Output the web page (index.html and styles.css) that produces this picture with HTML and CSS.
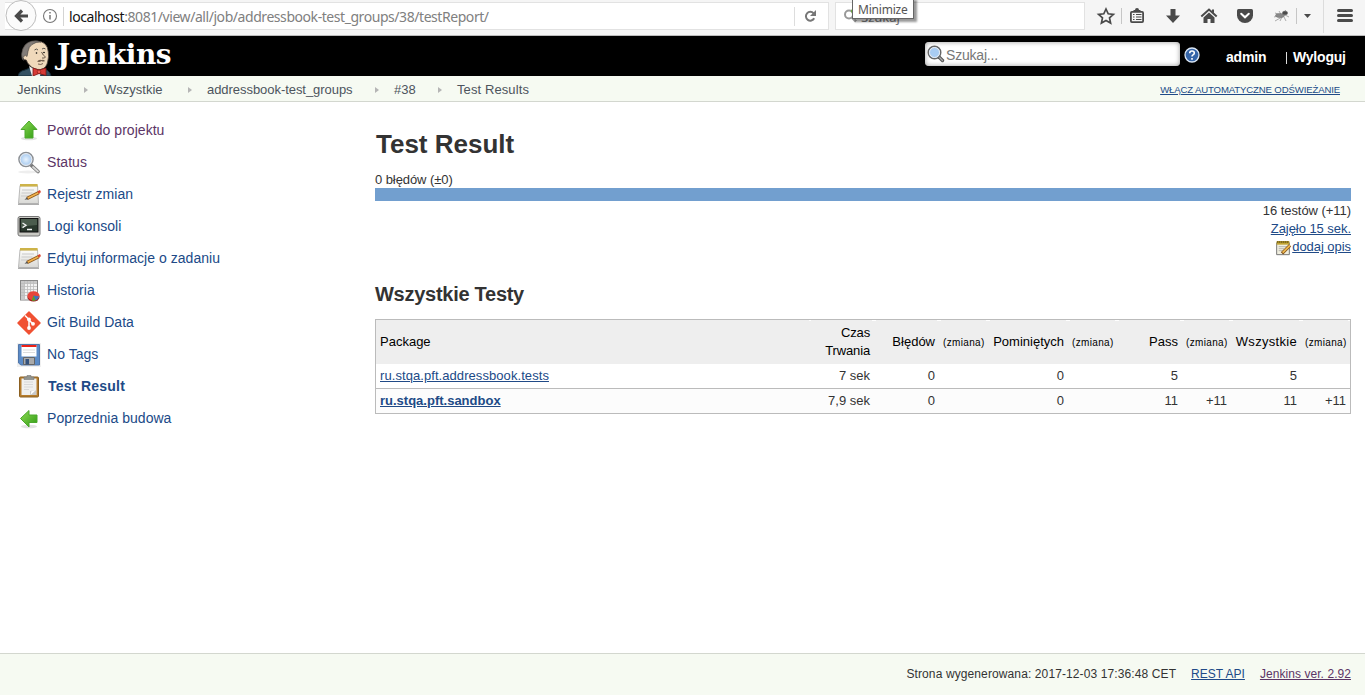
FILE: index.html
```html
<!DOCTYPE html>
<html lang="pl">
<head>
<meta charset="utf-8">
<title>Test Results [Jenkins]</title>
<link rel="stylesheet" href="styles.css">
</head>
<body>
<svg class="defs" width="0" height="0" aria-hidden="true">
  <defs>
    <linearGradient id="green" x1="0" y1="0" x2="1" y2="1"><stop offset="0" stop-color="#8fdc55"/><stop offset="1" stop-color="#2f9a13"/></linearGradient>
    <linearGradient id="paper" x1="0" y1="0" x2="0" y2="1"><stop offset="0" stop-color="#fdfdfb"/><stop offset="1" stop-color="#d9d9d6"/></linearGradient>
    <radialGradient id="glass"><stop offset="0" stop-color="#e8f3fd"/><stop offset="1" stop-color="#9cc3ee"/></radialGradient>
    <symbol id="lens" viewBox="0 0 24 24">
      <ellipse cx="11" cy="21" rx="10" ry="1.500" fill="#eee"/>
      <path d="M14.500 14.500l6.500 6" stroke="#777" stroke-width="3.600" stroke-linecap="round"/>
      <path d="M16 16l5 4.500" stroke="#d8d8d8" stroke-width="1.800" stroke-linecap="round"/>
      <circle cx="9" cy="8.500" r="7" fill="url(#glass)" stroke="#8b8f94" stroke-width="1.600"/>
      <circle cx="9" cy="8.500" r="5.900" fill="none" stroke="#f0f0f0" stroke-width="1"/>
    </symbol>
    <symbol id="lens-small" viewBox="0 0 18 18">
      <path d="M12 12l3.500 3.500" stroke="#555" stroke-width="3.400" stroke-linecap="round"/>
      <path d="M12.500 12.500l3 3" stroke="#aaa" stroke-width="1.200" stroke-linecap="round"/>
      <circle cx="7.500" cy="7.500" r="6.300" fill="url(#glass)" stroke="#666" stroke-width="1.400"/>
      <circle cx="7.500" cy="7.500" r="5" fill="#a8ccf3" stroke="#eee" stroke-width="1"/>
    </symbol>
    <symbol id="notepad" viewBox="0 0 24 24">
      <path d="M3 2.500h17.500l1 18H1.500z" fill="url(#paper)" stroke="#aaa" stroke-width=".8"/>
      <path d="M1 21.300h21" stroke="#999" stroke-width="1"/>
      <path d="M3 1h17.500v2.500H3z" fill="#b99a2b"/>
      <path d="M3.500 2h17" stroke="#eedc7d" stroke-width="1.500" stroke-dasharray="1 1"/>
      <path d="M5 7h12M4.500 10h11M4 13h8" stroke="#c9c9c9"/>
      <path d="M10 15.500l12-6" stroke="#8d5717" stroke-width="3.200"/>
      <path d="M10.500 15.200l11-5.400" stroke="#f0b14e" stroke-width="1.800"/>
      <path d="M20.600 8.300l2.400-1.200 1 2.200-2.500 1.300z" fill="#d9452e"/>
      <path d="M7.500 16.700l2.500-2.400 1.200 2z" fill="#555"/>
    </symbol>
  </defs>
</svg>

<div class="browser">
  <div class="url">
    <svg class="url-icons" width="60" height="32" viewBox="0 0 60 32">
      <circle cx="16" cy="15.500" r="15" fill="#fbfbfb" stroke="#bcbcbc"/>
      <path d="M23 16H11.500M17 10.500L11.500 16l5.500 5.500" fill="none" stroke="#4a4a4a" stroke-width="3.200"/>
      <circle cx="45" cy="16" r="6.500" fill="none" stroke="#777" stroke-width="1.100"/>
      <path d="M45 15v4.500M45 12v1.600" stroke="#777" stroke-width="1.500"/>
      <path d="M58.500 7v19" stroke="#d4d4d4"/>
    </svg>
    <span class="address"><b>localhost</b>:8081/view/all/job/addressbook-test_groups/38/testReport/</span>
    <svg class="reload" width="34" height="26" viewBox="0 0 34 26">
      <path d="M.5 4v19" stroke="#ddd"/>
      <path d="M19.600 10.300a4.400 4.400 0 1 0 .6 5" fill="none" stroke="#777" stroke-width="2"/>
      <path d="M22 7v6h-6z" fill="#777"/>
    </svg>
  </div>
  <div class="web-search">
    <svg width="18" height="20" viewBox="0 0 18 20"><circle cx="7" cy="8.500" r="4" fill="none" stroke="#999" stroke-width="2"/><path d="M10 11.500l4 4" stroke="#999" stroke-width="2.500"/><circle cx="11" cy="5" r="2" fill="#62ad32"/></svg>
    <span>Szukaj</span>
    <div class="tooltip">Minimize</div>
  </div>
  <svg class="tools" width="280" height="35" viewBox="1085 0 280 35">
    <path d="M1106 9l2.200 4.800 5.200.6-3.900 3.500 1.100 5.200-4.600-2.600-4.600 2.600 1.100-5.200-3.900-3.500 5.200-.6z" fill="none" stroke="#4a4a4a" stroke-width="1.700"/>
    <path d="M1121.500 8v16M1296.500 8v16" stroke="#c6c6c6"/>
    <rect x="1130.900" y="11.900" width="12.200" height="10.200" rx="1" fill="none" stroke="#4a4a4a" stroke-width="1.800"/>
    <path d="M1133.500 12V9.900h1.500a2 2 0 0 1 4 0h1.500V12z" fill="#4a4a4a"/>
    <path d="M1133 14.500h1.500M1136 14.500h5.500M1133 17h1.500M1136 17h5.500M1133 19.500h1.500M1136 19.500h5.500" stroke="#4a4a4a" stroke-width="1.200"/>
    <path d="M1170.500 9h5v6.500h4.500l-7 7.500-7-7.500h4.500z" fill="#4a4a4a"/>
    <path d="M1201.300 16.500l7.700-6.900 7.700 6.900" fill="none" stroke="#4a4a4a" stroke-width="2"/>
    <path d="M1203.500 17.500l5.500-5 5.500 5v5.500h-4v-4h-3v4h-4zM1212 9.500h2v4l-2-1.700z" fill="#4a4a4a"/>
    <path d="M1238.500 9h13q1.500 0 1.500 1.500v5a8 7.500 0 0 1-16 0v-5q0-1.500 1.500-1.500z" fill="#4a4a4a"/>
    <path d="M1241.200 13.700l3.800 3.600 3.800-3.600" fill="none" stroke="#fff" stroke-width="2" stroke-linecap="round"/>
    <g stroke="#777" stroke-width=".6" fill="#888">
      <path d="M1275 13l6 2M1274 17l8-2M1275 21l7-4M1280 21l2-4M1282 14l4-4M1284 17l2 4M1285 15l4 2M1279 11l3 5"/>
      <ellipse cx="1280" cy="15.500" rx="4.500" ry="2"/><ellipse cx="1285" cy="13" rx="2.700" ry="1.900" fill="#4a4a4a"/>
    </g>
    <path d="M1304 14h7l-3.500 4z" fill="#4a4a4a"/>
    <path d="M1323.500 0v33" stroke="#dcdcdc"/>
    <path d="M1338.500 10.500h13M1338.500 15.500h13M1338.500 20.500h13" stroke="#4a4a4a" stroke-width="3" stroke-linecap="round"/>
  </svg>
</div>

<header class="header">
  <svg class="butler" width="34" height="36" viewBox="0 0 34 36">
    <path d="M0 36q1-5 7-6l5-2h11l6 2q3 2 4 6z" fill="#335061" stroke="#162c38"/>
    <path d="M11 26l7 4 6-3-2 9h-8z" fill="#eee"/>
    <path d="M4 15Q4 1.500 18 1q11.500 0 12.300 11 .7 5-.5 9-1 7-7 8.500-7 .5-11.500-4.500-2-2-3-5Q4 20 4 15z" fill="#f0d9bb" stroke="#4a403a" stroke-width=".8"/>
    <path d="M3.500 14Q5 3 14 1q6-.8 9 1-5-.5-9 2.500-3.500 2.500-4 7l-1 5q-1.500-2-3-.5-1.500 1-.5 4.500-2-1-2-6.500z" fill="#827c78" stroke="#3b3735" stroke-width=".6"/>
    <path d="M16.500 10q2-2 3.500 0M24 9q2-1.500 3.500 0" fill="none" stroke="#333" stroke-width=".8"/>
    <circle cx="18.500" cy="13" r=".8"/><circle cx="26" cy="12.500" r=".8"/>
    <path d="M23.500 12q1.500 3.500 4 5-1 1.500-3.500 1" fill="none" stroke="#4a3a30" stroke-width=".8"/>
    <path d="M19 21.500q2-2.500 4.500-1.500 2-1 3.500 1-2 1-3.500 0-2 1.500-4.500.5z" fill="#75604e"/>
    <path d="M20 24q3 1.200 5-.5" fill="none" stroke="#5a463a" stroke-width=".8"/>
    <path d="M15 28l6 2 7-2v7.500l-7-2-6 2.500z" fill="#d63a36" stroke="#7c1411" stroke-width=".8"/>
    <circle cx="21" cy="31.800" r="1.800" fill="#ef5a50" stroke="#7c1411" stroke-width=".6"/>
  </svg>
  <span class="logo">Jenkins</span>
  <div class="search"><svg width="18" height="18"><use href="#lens-small"/></svg><span>Szukaj...</span></div>
  <svg class="help" width="16" height="16" viewBox="0 0 16 16"><circle cx="8" cy="8" r="7" fill="#3565a8" stroke="#dce8f6" stroke-width="1.300"/><path d="M5.700 6.200Q5.700 4 8 4t2.300 2q0 1.200-1.300 1.900-1 .6-1 1.700M8 11v1.700" fill="none" stroke="#fff" stroke-width="1.600"/></svg>
  <b class="user">admin</b><b class="logout"><i></i>Wyloguj</b>
</header>

<nav class="crumbs">
  <span class="c1">Jenkins</span><i></i><span class="c2">Wszystkie</span><i></i><span class="c3">addressbook-test_groups</span><i></i><span class="c4">#38</span><i></i><span class="c5">Test Results</span>
  <a class="refresh">WŁĄCZ AUTOMATYCZNE ODŚWIEŻANIE</a>
</nav>

<div class="page">
  <aside class="side">
    <div class="task visited"><svg viewBox="0 0 24 24"><ellipse cx="12" cy="19.500" rx="8" ry="1.700" fill="#e2e2e2"/><path d="M12 2l8 8.500h-4V19H8v-8.500H4z" fill="url(#green)" stroke="#4ba82c"/></svg><span>Powrót do projektu</span></div>
    <div class="task visited"><svg><use href="#lens"/></svg><span>Status</span></div>
    <div class="task"><svg viewBox="0 0 24 24"><use href="#notepad"/></svg><span>Rejestr zmian</span></div>
    <div class="task"><svg viewBox="0 0 24 24"><rect x="1" y="1.500" width="22" height="19.500" rx="2" fill="#c9c9c3" stroke="#777"/><rect x="3" y="3.500" width="18" height="13.500" fill="#29372c" stroke="#111"/><path d="M4 4h16v6q-8 0-16 3z" fill="#4b5c4d"/><path d="M5.500 8l3.500 2.300-3.500 2.300M10 14.500h5" fill="none" stroke="#f4f4f4" stroke-width="1.300"/></svg><span>Logi konsoli</span></div>
    <div class="task"><svg viewBox="0 0 24 24"><use href="#notepad"/></svg><span>Edytuj informacje o zadaniu</span></div>
    <div class="task"><svg viewBox="0 0 24 24"><rect x="3.500" y="1.500" width="17" height="19.500" fill="#f2f2f2" stroke="#888"/><path d="M4 2h3.500v18.500H4zM4 2h16v2.500H4z" fill="#c9c9c9"/><path d="M7.500 2v18M10.500 2v18M13.500 2v18M16.500 2v18M4 4.500h16M4 7.500h16M4 10.500h16M4 13.500h16M4 16.500h16" stroke="#bbb" stroke-width=".8"/><ellipse cx="16.500" cy="18" rx="6" ry="4.500" fill="#a31515"/><ellipse cx="16.500" cy="16.800" rx="6" ry="4.500" fill="#e8453a"/><path d="M16.500 16.500l5.800 1q-1 3-3.800 4z" fill="#3e73bd"/><path d="M16.500 16.500l2.200 5q-2 .6-4-.1z" fill="#55a12f"/></svg><span>Historia</span></div>
    <div class="task"><svg viewBox="0 0 24 24"><path d="M12 1L23 12 12 23 1 12z" fill="#f05133" stroke="#f05133" stroke-width="1.500" stroke-linejoin="round"/><path d="M8 4.500l4 4v8.500M12 9l4 4" fill="none" stroke="#fff" stroke-width="1.500"/><g fill="#fff"><circle cx="12" cy="8.500" r="1.900"/><circle cx="12" cy="17" r="1.900"/><circle cx="16" cy="12.800" r="1.900"/></g></svg><span>Git Build Data</span></div>
    <div class="task"><svg viewBox="0 0 24 24"><path d="M0 0h24v24H0z" fill="#f0f0f0"/><path d="M1.500 1.500h21v20.500H4l-2.500-2z" fill="#5b8bc7" stroke="#5277aa"/><path d="M4.500 2h15v11.500h-15z" fill="#fff"/><path d="M4.500 2h15v2h-15z" fill="#ec2218"/><path d="M6 7h12M6 9.500h12" stroke="#ddd"/><path d="M6.500 14.500h11v7h-11z" fill="#aaa" stroke="#666"/><path d="M8.500 16H12v5.500H8.500z" fill="#34537f"/></svg><span>No Tags</span></div>
    <div class="task current"><svg viewBox="0 0 24 24"><rect x="2.500" y="2" width="19" height="20" rx="1" fill="#b67c2c" stroke="#8c6021"/><path d="M4.500 3.500h15v16.500h-15z" fill="#f0f0ee"/><path d="M7 7h9M7 9.500h9M7 12h9M7 14.500h5" stroke="#d8d8d8"/><path d="M13 20v-4l6-1v5z" fill="#c9c9c9"/><path d="M13.500 20l1-4 4.500-1z" fill="#fff"/><path d="M7 4.500V2h3V.5h4V2h3v2.500z" fill="#92958f" stroke="#777" stroke-width=".6"/></svg><span>Test Result</span></div>
    <div class="task"><svg viewBox="0 0 24 24"><ellipse cx="12" cy="19.500" rx="8" ry="1.700" fill="#e2e2e2"/><path d="M3.500 11.500L12 3.500V8h8v7.500h-8V20z" fill="url(#green)" stroke="#4ba82c"/></svg><span>Poprzednia budowa</span></div>
  </aside>

  <main class="main">
    <h1><span>Test Result</span></h1>
    <div class="fails"><span>0 błędów (±0)</span></div>
    <div class="bar"></div>
    <div class="totals">
      <span>16 testów (+11)</span>
      <a class="took">Zajęło 15 sek.</a>
      <span class="desc"><svg width="16" height="16" viewBox="0 0 24 24"><path d="M1 4h19v18H1z" fill="#f1efdf" stroke="#777" stroke-width="1.500"/><path d="M1 1.500h19V7H1z" fill="#c2a433"/><path d="M2 3h18" stroke="#5e4f15" stroke-width="3" stroke-dasharray="1.500 1.500"/><path d="M4 10h12M4 13h8M4 16h6" stroke="#999"/><path d="M9 20L21 8" stroke="#7c4c18" stroke-width="5"/><path d="M10 19L21 8" stroke="#edb84f" stroke-width="3"/></svg><a class="add">dodaj opis</a></span>
    </div>
    <h2><span>Wszystkie Testy</span></h2>
    <table>
      <colgroup><col class="w-package"><col class="w-num"><col class="w-num"><col class="w-diff"><col class="w-skip"><col class="w-diff"><col class="w-num"><col class="w-diff"><col class="w-all"><col class="w-last"></colgroup>
      <thead><tr><th>Package</th><th class="wrap">Czas Trwania</th><th>Błędów</th><th><small>(zmiana)</small></th><th>Pominiętych</th><th><small>(zmiana)</small></th><th>Pass</th><th><small>(zmiana)</small></th><th class="all">Wszystkie</th><th><small>(zmiana)</small></th></tr></thead>
      <tbody>
        <tr><td><a class="p1">ru.stqa.pft.addressbook.tests</a></td><td>7 sek</td><td>0</td><td></td><td>0</td><td></td><td>5</td><td></td><td>5</td><td></td></tr>
        <tr><td><a class="p2">ru.stqa.pft.sandbox</a></td><td>7,9 sek</td><td>0</td><td></td><td>0</td><td></td><td>11</td><td>+11</td><td>11</td><td>+11</td></tr>
      </tbody>
    </table>
  </main>
</div>

<footer class="footer"><span class="gen">Strona wygenerowana: 2017-12-03 17:36:48 CET</span><a class="api">REST API</a><a class="ver">Jenkins ver. 2.92</a></footer>
</body>
</html>
```
FILE: styles.css
```css
* { box-sizing: border-box; }
body {
  margin: 0;
  height: 695px;
  overflow: hidden;
  display: flex;
  flex-direction: column;
  background: #fff;
  color: #333;
  font: 12px/18px "Liberation Sans", Arial, sans-serif;
}
.defs { position: absolute; }
svg { display: block; flex: none; }
a { color: #204a87; text-decoration: underline; }
span, a, b { white-space: nowrap; }

.browser {
  height: 36px;
  flex: none;
  display: flex;
  align-items: flex-start;
  background: #f5f5f5;
  border-bottom: 1px solid #bcbcbc;
}
.url {
  width: 824px;
  height: 28px;
  margin: 2px 6px 0 5px;
  display: flex;
  align-items: center;
  background: #fff;
  border: 1px solid #e2e2e2;
  border-left: 0;
}
.url-icons { margin-top: -1px; }
.address {
  flex: 1;
  padding: 2px 0 0 4px;
  font: 14px/20px "Noto Sans", "Open Sans", sans-serif;
  letter-spacing: -.44px;
  color: #808080;
}
.address b { color: #111; font-weight: 400; }
.web-search {
  position: relative;
  width: 250px;
  height: 28px;
  margin-top: 2px;
  display: flex;
  align-items: center;
  padding-left: 6px;
  background: #fff;
  border: 1px solid #e2e2e2;
  font: 13px/20px "Noto Sans", sans-serif;
  color: #777;
}
.web-search span { margin: 1px 0 0 1px; }
.tooltip {
  position: absolute;
  left: 16px;
  top: -6px;
  width: 62px;
  height: 22px;
  padding-left: 5px;
  background: #fff;
  border: 1px solid #666;
  box-shadow: 3px 3px 2px rgba(0, 0, 0, .4);
  font: 12px/23px "Noto Sans", sans-serif;
  letter-spacing: -.2px;
  color: #555;
}

.header {
  height: 40px;
  flex: none;
  display: flex;
  background: #000;
  color: #fff;
}
.butler { margin: 4px 0 0 18px; }
.logo {
  width: 116px;
  margin-left: 5px;
  font: bold 28px/38px "DejaVu Serif", serif;
  letter-spacing: -.5px;
}
.search {
  width: 255px;
  height: 24px;
  margin: 6px 0 0 752px;
  display: flex;
  align-items: center;
  gap: 1px;
  padding-left: 2px;
  background: #fff;
  border-radius: 4px;
  box-shadow: inset 0 0 5px #999;
  font-size: 14px;
  letter-spacing: -.2px;
  color: #777;
}
.search span { padding-top: 2px; }
.help { margin: 11px 0 0 4px; }
.user, .logout { font-size: 14px; line-height: 43px; letter-spacing: -.2px; }
.user { width: 60px; margin-left: 26px; }
.logout { display: flex; align-items: center; height: 43px; }
.logout i { width: 1px; height: 12px; margin-right: 6px; background: #ddd; }

.crumbs {
  height: 26px;
  flex: none;
  display: flex;
  align-items: center;
  padding: 2px 25px 0 17px;
  background: #f6faf2;
  border-bottom: 1px solid #d3d7cf;
  font-size: 13px;
  color: #4d545d;
}
.crumbs i {
  border: 3px solid transparent;
  border-left: 4px solid #b5b5b5;
  border-right: 0;
}
.c1 { width: 67px; }
.c2 { width: 84px; margin-left: 16px; }
.c3 { width: 168px; margin-left: 15px; letter-spacing: -.05px; }
.c4 { width: 44px; margin-left: 15px; }
.c5 { margin-left: 15px; letter-spacing: .1px; }
.refresh { margin-left: auto; font-size: 9.600px; letter-spacing: -.14px; }

.page { flex: 1; display: flex; }
.side {
  width: 375px;
  flex: none;
  padding: 12px 0 0 17px;
}
.task {
  height: 32px;
  display: flex;
  align-items: center;
  gap: 6px;
  color: #204a87;
  font-size: 14px;
  letter-spacing: .04px;
}
.task svg { width: 24px; height: 24px; margin-top: 2px; }
.visited { color: #5c3566; }
.current { font-weight: bold; }
.current span { padding-left: 1px; letter-spacing: .25px; }

.main { width: 976px; padding-top: 24px; font-size: 13px; }
h1 { margin: 0; padding-left: 1px; font-size: 26px; line-height: 36px; }
h2 { margin: 28px 0 0; font-size: 20px; line-height: 20px; letter-spacing: -.27px; }
.fails { margin-top: 9px; height: 17px; line-height: 18px; letter-spacing: -.08px; }
.bar { height: 13px; background: #729fcf; }
.totals {
  display: flex;
  flex-direction: column;
  align-items: flex-end;
  padding-top: 1px;
  letter-spacing: -.05px;
}
.desc { display: flex; }
.desc svg { margin-top: 2px; }
table {
  width: 976px;
  margin-top: 15px;
  table-layout: fixed;
  border-spacing: 0;
  border: 1px solid #bbb;
  text-align: right;
}
th, td { padding: 0 4px; }
th:first-child, td:first-child { text-align: left; }
th {
  height: 44px;
  background: #eee;
  color: #000;
  font-size: 13px;
  font-weight: 400;
}
th + th {
  background: linear-gradient(#fff, #fff) 0 0 / 2px 1px no-repeat,
    linear-gradient(#fff, #fff) 100% 0 / 2px 1px no-repeat, #eee;
}
.wrap { letter-spacing: -.15px; }
.all { letter-spacing: .3px; }
th small { font-size: 10px; letter-spacing: .35px; white-space: nowrap; }
td { height: 24px; line-height: 24px; }
tbody tr + tr td { height: 25px; border-top: 1px solid #bbb; background: #fcfcfc; }
.w-package { width: 433px; }
.w-num { width: 65px; }
.w-diff { width: 49px; }
.w-skip { width: 80px; }
.w-all { width: 70px; }
.w-last { width: 49px; }
.p1 { letter-spacing: .07px; }
.p2 { font-weight: bold; }

.footer {
  height: 42px;
  flex: none;
  display: flex;
  justify-content: flex-end;
  align-items: center;
  gap: 15px;
  padding: 0 14px 2px 0;
  background: #f6faf2;
  border-top: 1px solid #d3d7cf;
}
.gen { letter-spacing: .11px; }
.ver { color: #5c3566; letter-spacing: .06px; }
```
